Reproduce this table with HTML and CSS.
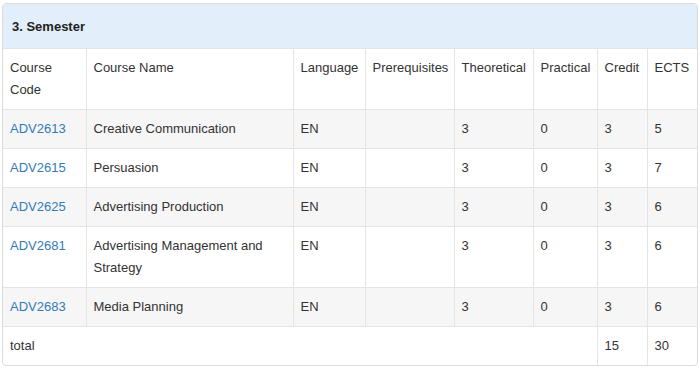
FILE: index.html
```html
<!DOCTYPE html>
<html>
<head>
<meta charset="utf-8">
<link rel="stylesheet" href="styles.css">
</head>
<body>
<div class="panel">
  <div class="panel-heading">3. Semester</div>
  <table class="course-table">
    <colgroup>
      <col class="c1"><col class="c2"><col class="c3"><col class="c4"><col class="c5"><col class="c6"><col class="c7"><col class="c8">
    </colgroup>
    <thead>
      <tr class="head-row">
        <td>Course Code</td>
        <td>Course Name</td>
        <td>Language</td>
        <td>Prerequisites</td>
        <td>Theoretical</td>
        <td>Practical</td>
        <td>Credit</td>
        <td>ECTS</td>
      </tr>
    </thead>
    <tbody>
      <tr class="striped">
        <td><a href="#">ADV2613</a></td>
        <td>Creative Communication</td>
        <td>EN</td>
        <td></td>
        <td>3</td>
        <td>0</td>
        <td>3</td>
        <td>5</td>
      </tr>
      <tr>
        <td><a href="#">ADV2615</a></td>
        <td>Persuasion</td>
        <td>EN</td>
        <td></td>
        <td>3</td>
        <td>0</td>
        <td>3</td>
        <td>7</td>
      </tr>
      <tr class="striped">
        <td><a href="#">ADV2625</a></td>
        <td>Advertising Production</td>
        <td>EN</td>
        <td></td>
        <td>3</td>
        <td>0</td>
        <td>3</td>
        <td>6</td>
      </tr>
      <tr>
        <td><a href="#">ADV2681</a></td>
        <td>Advertising Management and Strategy</td>
        <td>EN</td>
        <td></td>
        <td>3</td>
        <td>0</td>
        <td>3</td>
        <td>6</td>
      </tr>
      <tr class="striped">
        <td><a href="#">ADV2683</a></td>
        <td>Media Planning</td>
        <td>EN</td>
        <td></td>
        <td>3</td>
        <td>0</td>
        <td>3</td>
        <td>6</td>
      </tr>
      <tr class="total-row">
        <td colspan="6">total</td>
        <td>15</td>
        <td>30</td>
      </tr>
    </tbody>
  </table>
</div>
</body>
</html>
```

FILE: styles.css
```css
html, body {
  margin: 0;
  padding: 0;
  background: #ffffff;
}
body {
  padding: 3px 2px 0 2px;
  font-family: "Liberation Sans", Arial, Helvetica, sans-serif;
  font-size: 13px;
  color: #333333;
}
.panel {
  width: 696px;
  box-sizing: border-box;
  border: 1px solid #dcdcdc;
  border-radius: 4px;
  overflow: hidden;
  background: #ffffff;
}
.panel-heading {
  background: #e2eef9;
  padding: 12px 9px 10px 9px;
  line-height: 22px;
  font-weight: bold;
  color: #222222;
}
.course-table {
  width: 694px;
  table-layout: fixed;
  border-collapse: collapse;
}
.c1 { width: 83px; }
.c2 { width: 207px; }
.c3 { width: 72px; }
.c4 { width: 89px; }
.c5 { width: 79px; }
.c6 { width: 64px; }
.c7 { width: 50px; }
.c8 { width: 50px; }
.course-table td {
  border: 1px solid #e4e4e4;
  padding: 8px 8px 8px 7px;
  line-height: 22px;
  vertical-align: top;
  text-align: left;
}
.course-table tr td:first-child { border-left: none; }
.course-table tr td:last-child { border-right: none; }
.course-table tr:last-child td { border-bottom: none; }
.course-table .striped td {
  background: #f6f6f6;
}
.course-table a {
  color: #337ab7;
  text-decoration: none;
}
```
